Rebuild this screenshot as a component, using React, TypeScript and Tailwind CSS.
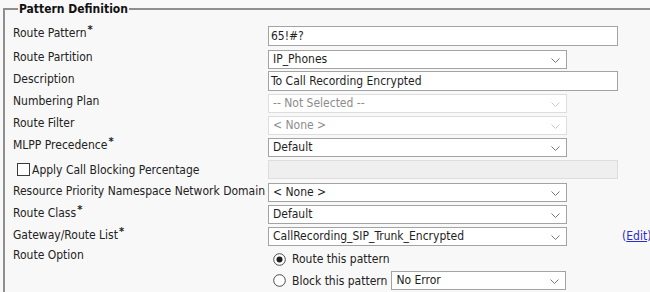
import React from "react";

type Row = {
  label: string;
  required?: boolean;
  kind: "input" | "select" | "disabled-select";
  value: string;
};

const topRows: Row[] = [
  { label: "Route Pattern", required: true, kind: "input", value: "65!#?" },
  { label: "Route Partition", kind: "select", value: "IP_Phones" },
  { label: "Description", kind: "input", value: "To Call Recording Encrypted" },
  { label: "Numbering Plan", kind: "disabled-select", value: "-- Not Selected --" },
  { label: "Route Filter", kind: "disabled-select", value: "< None >" },
  { label: "MLPP Precedence", required: true, kind: "select", value: "Default" },
];

const bottomRows: Row[] = [
  { label: "Resource Priority Namespace Network Domain", kind: "select", value: "< None >" },
  { label: "Route Class", required: true, kind: "select", value: "Default" },
  { label: "Gateway/Route List", required: true, kind: "select", value: "CallRecording_SIP_Trunk_Encrypted" },
];

function Chevron({ muted }: { muted?: boolean }) {
  return (
    <svg width="9" height="5" viewBox="0 0 9 5" className="absolute right-[6px] top-[7px]">
      <path d="M0.5 0.5 L4.5 4.5 L8.5 0.5" fill="none" stroke={muted ? "#c8c8c8" : "#777"} strokeWidth="1" />
    </svg>
  );
}

function Select({ value, muted, width = "w-[299px]" }: { value: string; muted?: boolean; width?: string }) {
  return (
    <div
      className={`relative h-[19px] shrink-0 ${width} border ${
        muted ? "border-[#dddddd] text-[#8c8c8c]" : "border-[#a3a3a3] text-[#1e1e1e]"
      } bg-white pl-[4px] leading-[17px] whitespace-nowrap`}
    >
      {value}
      <Chevron muted={muted} />
    </div>
  );
}

function Control({ row }: { row: Row }) {
  if (row.kind === "input")
    return (
      <div className="h-[20px] w-[350px] border border-[#a3a3a3] bg-white pl-[2px] leading-[18px] text-[#1e1e1e]">
        {row.value}
      </div>
    );
  return <Select value={row.value} muted={row.kind === "disabled-select"} />;
}

function Label({ row }: { row: Row }) {
  return (
    <div className="self-start leading-[16px] whitespace-nowrap text-[#222]">
      {row.label}
      {row.required && <span className="relative top-[-4px] ml-[1px] font-bold text-[11px]">*</span>}
    </div>
  );
}

function Radio({ checked }: { checked?: boolean }) {
  return (
    <svg width="13" height="13" viewBox="0 0 13 13" className="shrink-0">
      <circle cx="6.5" cy="6.5" r="5.8" fill="white" stroke="#4a4a4a" strokeWidth="1" />
      {checked && <circle cx="6.5" cy="6.5" r="3" fill="#1e1e1e" />}
    </svg>
  );
}

export default function App() {
  return (
    <div
      className="w-[650px] h-[292px] overflow-hidden bg-[#f8f8f8] text-[12px]"
      style={{ fontFamily: '"DejaVu Sans Condensed", "DejaVu Sans", sans-serif' }}
    >
      <fieldset className="ml-[3px] mt-[2px] w-[700px] h-[320px] border-2 border-[#8e8e8e] pl-[8px] pt-[9px]">
        <legend className="ml-[5px] px-[1px] leading-[14px] font-bold text-[12px] text-[#111]">Pattern Definition</legend>
        <div className="grid grid-cols-[255px_1fr] auto-rows-[22px]">
          {topRows.map((r, i) => (
            <React.Fragment key={r.label}>
              <div className={`flex ${i === 0 ? "pt-0" : "pt-[2px]"}`}>
                <Label row={r} />
              </div>
              <div className={`flex ${i === 0 ? "items-start pt-[1px]" : "items-center pt-[2px]"}`}>
                <Control row={r} />
              </div>
            </React.Fragment>
          ))}
          <div className="flex items-center gap-[2px] pl-[4px] pt-[3px]">
            <span className="inline-block w-[13px] h-[13px] border border-[#3a3a3a] bg-white" />
            <span className="text-[#222]">Apply Call Blocking Percentage</span>
          </div>
          <div className="flex items-center pt-[2px]">
            <div className="h-[19px] w-[350px] border border-[#dddddd] bg-[#efefef]" />
          </div>
          {bottomRows.map((r) => (
            <React.Fragment key={r.label}>
              <div className="flex pt-[4px]">
                <Label row={r} />
              </div>
              <div className="flex items-center pt-[4px] relative">
                <Control row={r} />
                {r.label === "Gateway/Route List" && (
                  <span className="absolute left-[354px] text-[#22379e] whitespace-nowrap">
                    (<span className="underline text-[#2b2bd6]">Edit</span>)
                  </span>
                )}
              </div>
            </React.Fragment>
          ))}
          <div className="pt-[2px] leading-[16px] text-[#222]">Route Option</div>
          <div className="row-span-2 flex flex-col gap-[3px] pl-[5px] pt-[5px]">
            <div className="flex items-center gap-[6px] h-[19px]">
              <Radio checked />
              <span className="text-[#222] whitespace-nowrap">Route this pattern</span>
            </div>
            <div className="flex items-center gap-[6px] h-[19px]">
              <Radio />
              <div className="flex items-center gap-[4px]">
                <span className="text-[#222] whitespace-nowrap">Block this pattern</span>
                <Select value="No Error" width="w-[175px]" />
              </div>
            </div>
          </div>
        </div>
      </fieldset>
    </div>
  );
}
